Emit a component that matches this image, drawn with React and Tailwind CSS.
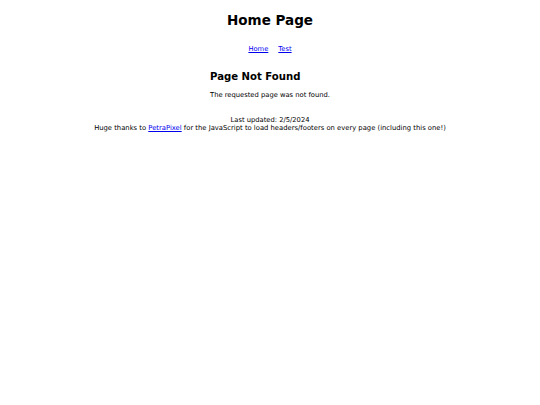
export default function App() {
    const linkStyle = "text-[#0000ee] underline";

    return (
        <div className="min-h-screen bg-white text-black font-['DejaVu_Sans',sans-serif] text-[6.75px] leading-[8px]">
            <header className="pt-[12px] text-center">
                <h1 className="text-[13.5px] leading-[16px] font-bold">Home Page</h1>
                <nav className="mt-[17px] flex justify-center gap-[10px]">
                    <a href="#" className={linkStyle}>Home</a>
                    <a href="#" className={linkStyle}>Test</a>
                </nav>
            </header>

            <main className="mt-[18px] mx-auto w-fit">
                <h2 className="text-[10.125px] leading-[12px] font-bold">Page Not Found</h2>
                <p className="mt-[8px]">The requested page was not found.</p>
            </main>

            <footer className="mt-[17px] text-center">
                <p>Last updated: 2/5/2024</p>
                <p className="text-[6.8px]">
                    Huge thanks to <a href="#" className={linkStyle}>PetraPixel</a> for the JavaScript to load headers/footers on every page (including this one!)
                </p>
            </footer>
        </div>
    );
}
